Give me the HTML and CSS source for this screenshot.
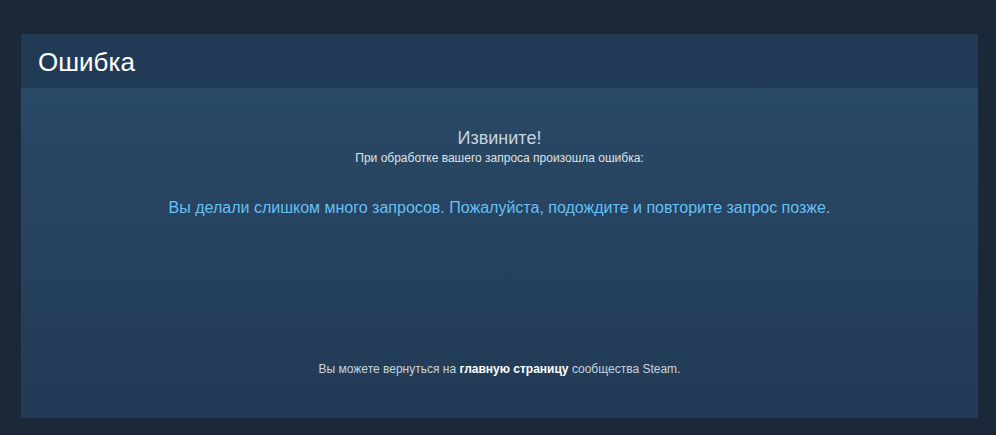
FILE: index.html
```html
<!DOCTYPE html>
<html lang="ru">
<head>
<meta charset="utf-8">
<title>Ошибка</title>
<link rel="stylesheet" href="styles.css">
</head>
<body>
<div class="panel">
  <div class="panel-header"><h2 class="title">Ошибка</h2></div>
  <div class="panel-body">
    <div class="sorry">Извините!</div>
    <div class="sub">При обработке вашего запроса произошла ошибка:</div>
    <div class="message">Вы делали слишком много запросов. Пожалуйста, подождите и повторите запрос позже.</div>
    <div class="back">Вы можете вернуться на <a class="link" href="#">главную страницу</a> сообщества Steam.</div>
  </div>
</div>
</body>
</html>
```
FILE: styles.css
```css
html, body {
  margin: 0;
  padding: 0;
}
body {
  background: #1b2838;
  font-family: "Liberation Sans", Arial, sans-serif;
  padding: 34px 18px 17px 21px;
  width: 957px;
}
.panel {
  width: 957px;
  height: 384px;
  display: flex;
  flex-direction: column;
}
.panel-header {
  height: 54px;
  background: #213b57;
  display: flex;
  align-items: center;
  padding-left: 17px;
}
.title {
  margin: 0;
  font-weight: normal;
  font-size: 26px;
  color: #ffffff;
  line-height: 30px;
  margin-top: 2px;
}
.panel-body {
  flex: 1;
  background: linear-gradient(to bottom, #2a4966 0%, #223a55 100%);
  display: flex;
  flex-direction: column;
  align-items: center;
  padding-top: 39px;
}
.sorry {
  font-size: 18px;
  color: #c6d4df;
  line-height: 22px;
}
.sub {
  font-size: 12px;
  color: #dfe3e6;
  line-height: 16px;
  margin-top: 1px;
}
.message {
  font-size: 16px;
  color: #66c0f4;
  line-height: 20px;
  margin-top: 32px;
}
.back {
  margin-top: auto;
  margin-bottom: 41px;
  font-size: 12px;
  color: #c6d4df;
  line-height: 16px;
}
.link {
  color: #ffffff;
  font-weight: bold;
  text-decoration: none;
}
```
